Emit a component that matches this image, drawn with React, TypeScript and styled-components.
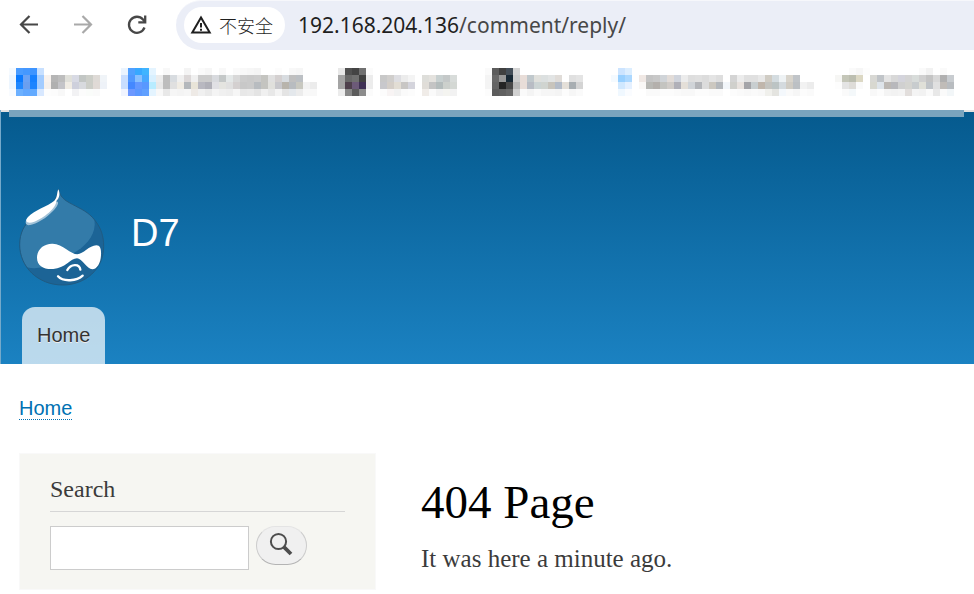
import React from "react";
import styled, { createGlobalStyle } from "styled-components";

const GlobalStyle = createGlobalStyle`
  * { box-sizing: border-box; }
  body { margin: 0; background: #fff; }
`;

const sans = `"Liberation Sans", Arial, sans-serif`;
const serif = `"Liberation Serif", Georgia, serif`;

const Toolbar = styled.nav`
  display: flex;
  align-items: center;
  height: 50px;
  padding-left: 16px;
`;

const ToolButton = styled.button<{ $faded?: boolean }>`
  display: grid;
  place-items: center;
  width: 26px;
  height: 26px;
  margin-right: 28px;
  padding: 0;
  border: 0;
  background: none;
  color: ${(p) => (p.$faded ? "#a9a9a9" : "#474747")};
`;

const AddressBar = styled.div`
  display: flex;
  flex: 1;
  align-items: center;
  align-self: stretch;
  min-width: 0;
  margin-left: -2px;
  padding: 0 0 2px 8px;
  border-top: 1px solid #f6f7fb;
  border-radius: 25px 0 0 25px;
  background: #ebeef7;
`;

const SecurityChip = styled.button`
  display: flex;
  flex: none;
  align-items: center;
  gap: 7px;
  width: 101px;
  height: 36px;
  padding: 0 0 0 6px;
  border: 0;
  border-radius: 18px;
  background: #fff;
  color: #1f1f1f;
  font: 300 18px/36px "Noto Sans CJK SC", sans-serif;
  white-space: nowrap;
`;

const Address = styled.div`
  margin-left: 13px;
  color: #474747;
  font: 21px/46px "Noto Sans", "Open Sans", sans-serif;
  white-space: nowrap;
`;

const Host = styled.span`
  color: #1f1f1f;
`;

const Bookmarks = styled.nav`
  display: flex;
  gap: 14px;
  height: 60px;
  padding: 18px 0 0 9px;
  overflow: hidden;
`;

const BookmarkLink = styled.a`
  flex: none;
  height: 28px;
`;

const Mosaic = styled.svg`
  display: block;
`;

const Header = styled.header`
  padding: 0 10px 0 8px;
  border-left: 1px solid #75a9ca;
  background: linear-gradient(#055a8e, #1b82c2) 0 2px no-repeat, #e2e2e2;
`;

const MenuStrip = styled.div`
  height: 7px;
  background: #7aa4be;
`;

const Branding = styled.div`
  display: flex;
  align-items: flex-start;
  gap: 26px;
  padding: 72px 10px 21px;
`;

const SiteName = styled.a`
  margin-top: 22px;
  color: #fffeff;
  font: 38px/44px ${sans};
  text-decoration: none;
`;

const Tabs = styled.nav`
  display: flex;
  padding-left: 13px;
`;

const Tab = styled.a`
  height: 57px;
  padding: 0 15px;
  border-radius: 13px 13px 0 0;
  background: rgba(255, 255, 255, 0.7);
  color: #333;
  font: 20px/56px ${sans};
  text-decoration: none;
  text-shadow: 0 1px #eee;
`;

const Breadcrumb = styled.nav`
  display: flex;
  padding: 34px 19px 33px;
`;

const BreadcrumbLink = styled.a`
  border-bottom: 1px dotted #0071b3;
  color: #0071b3;
  font: 20px/21px ${sans};
  text-decoration: none;
`;

const Columns = styled.div`
  display: grid;
  grid-template-columns: 357fr 552fr;
  gap: 45px;
  align-items: start;
  padding: 0 1px 4px 19px;
`;

const SearchBlock = styled.aside`
  padding: 21px 30px 19px;
  border: 1px solid #f9f9f9;
  background: #f6f6f2;
`;

const BlockTitle = styled.h2`
  margin: 0 0 14px;
  padding-bottom: 8px;
  border-bottom: 1px solid #d6d6d6;
  color: #3b3b3b;
  font: 24px/28px ${serif};
`;

const SearchForm = styled.form`
  display: flex;
  align-items: flex-start;
  gap: 7px;
`;

const SearchInput = styled.input`
  width: 199px;
  height: 44px;
  padding: 4px;
  border: 1px solid #ccc;
  background: #fff;
  font: 20px ${sans};
`;

const SearchButton = styled.button`
  display: grid;
  place-items: center;
  width: 51px;
  height: 39px;
  padding: 0 2px 4px 0;
  border: 1px solid #ccc;
  border-top-color: #e4e4e4;
  border-bottom-color: #b4b4b4;
  border-radius: 20px;
  background: #f0f0f0;
`;

const Content = styled.main`
  padding-top: 22px;
  font-family: ${serif};
`;

const PageTitle = styled.h1`
  margin: 0;
  color: #000;
  font-size: 47px;
  font-weight: 400;
  line-height: 54px;
`;

const Message = styled.p`
  margin: 16px 0 0;
  color: #3b3b3b;
  font-size: 25px;
  line-height: 28px;
`;

const CELL = 7;

type Bookmark = { name: string; columns: number; rows: string[] };

const bookmarks: Bookmark[] = [
  {
    name: "Bookmark 1",
    columns: 14,
    rows: [
      "f5faff 4a9cff 4598ff 3d94ff c8e0ff",
      "edf6ff 0a7aff 6aa2f5 1580ff a3ccff f8f2ee b5b5b5 bdbdbd e0e0da d8dae4 c2c6c4 cccec8 dedad6 f0f4f8",
      "edf6ff 2088ff 6a9ff0 1c84ff a3ccff f5f0ec b0b0b0 c4c4c8 f0ece4 ced0dc d8dade cccec8 e0dad6 eef2f8",
      "f8fbff 6cb0ff 62a8ff 62aaff d8e8ff fdfdfd fcfcfc f8f8f8 ffffff f2f2f4 fcfcfc fafcfa fafafa",
    ],
  },
  {
    name: "Bookmark 2",
    columns: 29,
    rows: [
      "eaf4ff 50a0ff 38a8ff 40b4ff e4f4ff ffffff f8f8f8 ffffff ffffff f4f4f4 ffffff fafafa f6f6f6 ffffff f8f8f8 ffffff fafafa f8f8f8 f6f6f6 f4f4f4 ffffff ffffff fcfcfc ffffff f8f8f8 f6f6f6",
      "c8deff 5098ff 88c0ff 48a8ff d8f0ff ececec bdbdbd d8dce0 f0f0f0 dcd8d8 f0f0f0 cccccc cccccc d8dade c4c8c8 e4e8e8 d8d8d8 cccccc cacaca cccccc c4c4c0 e0e0e0 d4d0d0 d8dce0 c0c0c0 bcc0c4",
      "c8deff 4488ff 6498ff 5898ff b8ecff e8e8e8 bdbdbd e0e0e0 f0ece4 b4b8bc e8e4d8 b8b8c0 b0b0b8 e0e0e4 e4e4e0 e0e0e0 d4d0d0 c8c8c8 cacaca b8bcc0 c4c4c0 e0e0dc c8c8cc b8b4ac b8bcc0 c8c8c0 f2f2f2 ececec",
      "f0f4ff 6c98ff 5c98ff 60a0ff e4f4ff f8f8f8 e8e8e8 f6f6f6 f4f4f4 f6f6f6 eeeae6 f0f0f0 eaeaea f4f4f4 f0f0f0 eeeeee f6f6f6 e8e8e8 eaeaea e4e4e4 f0f0f0 e8e8e8 f4f4f4 e4e4e4 e4e8ec ececec f8f8f8 f8f8f8",
    ],
  },
  {
    name: "Bookmark 3",
    columns: 19,
    rows: [
      "e8e8e8 505050 444444 707070 fbfbfb",
      "a4a4a4 686868 707070 404040 ececec ffffff c8c8c8 d0cecc dedee2 ececec f4f4f4 ffffff dededa e4e2de c8d0d0 c4c8c8 d8dcda",
      "a4a4a4 4e404c 6c5a78 3e3054 ececec ffffff c8c8cc d4cec8 e2ddd4 c8c6c4 d4d4dc ffffff e0ddd8 c4c4c4 b4bcbc ccd0cc d4d8d4",
      "ececec 888888 5c5c5c 8c8c8c fbfbfb ffffff fcfcfc f8f4f4 f2f2f2 fafafa fcfcfc ffffff f0ece8 fafafa f2f2f2 f4f4f0 f2f2f2",
    ],
  },
  {
    name: "Bookmark 4",
    columns: 16,
    rows: [
      "fafafa 5c5c5c 404040 444e58 d4d4d4",
      "f4f4f4 686868 989898 182834 cccccc e8ddd8 c0c8cc e0e0dc dce0e0 e2e4e4 e0dcd8 ffffff e0e0e0 e4e4e4",
      "f4f4f4 646464 242424 484848 b8b8b8 e8ddd8 b8bcc4 ccd4d4 d0d4d0 c8c4bc b4bcc8 e4dfd8 a8aeb2 d4d4d4",
      "fcfcfc 5c5c5c 606060 686868 d0d0d0 fafafa f4f4f4 fafafa f6f6f6 f6f6f6 f4f4f4 fcfcfc f6f6f6 fafafa",
    ],
  },
  {
    name: "Bookmark 5",
    columns: 30,
    rows: [
      "ffffff cce4ff dceeff",
      "f4faff 98d0ff acd8ff ffffff f0e8e4 c4c4c4 c8c8c8 d0d4d8 e2dcd8 d0d4dc ececec dedede e0e0e0 dcdcdc e4e4e4 dedede ffffff d4d4d4 ececec e0e0e0 e0e0e0 e8e8e8 d0ccc4 d4dce0 eef2f4 d8d4cc c0c4c8",
      "ffffff d0e8ff e4f0ff ffffff faf8f6 b8b8b4 b4b0ac c4c4c0 d0ccc8 b0b0b8 e4dfd8 d0d4d8 b4b6ba dcdcdc ccc8c0 b4b8bc f2f6fa d0d0cc e8e2de a4a4a8 c8ced0 c0b6ac c4c4c0 bcc4c4 d4dade d0ccc4 bcc0c4 f2f2f2 ececec",
      "ffffff f0f8ff fafcff ffffff ffffff fafafa fafafa fcfcfc fcfcfc fafafa f8f8f8 f8f8f8 fcfcfc fcfcfc fafafa fafafa ffffff fcfcfc fafafa f8f8f8 fafafa f8f8f8 f0f0ec e4e4e0 f4f8fc fafafa f6f6f6 fcfcfc fafafa",
    ],
  },
  {
    name: "Bookmark 6",
    columns: 17,
    rows: [
      "ffffff ffffff fafafa f6f6f6 fdfdfd ffffff ffffff ffffff ffffff ffffff ffffff ffffff fafafa f2f2f2 ffffff fafafa",
      "f6f6f4 c4c6b8 bcbeb0 dcd8c4 ffffff d8d8d4 c0c4c8 e4e4e4 d8d8d8 d4d4dc d4d4d4 d8dcda d0d0d0 c4c4c4 d8d8d8 b0b0b0 c8ccd0",
      "fdfdfd e4e4e4 dedcd8 fafafa ffffff d8d8d0 dee4ea bcb8b4 b8b8bc d0d0d0 d4d4d0 c8ccce e0e0d8 c0c4c8 e0e0e0 c0bcb8 b8bcc0",
      "ffffff fafafa f4f8fa ffffff ffffff f8f8f8 fcfcfc f4f4f4 f2f2f2 f4f4f4 e2dedc f4f4f4 f2f2f2 fafafa e8e8e8 fafafa f2f6f8",
    ],
  },
];

function BookmarkItem({ name, columns, rows }: Bookmark) {
  return (
    <BookmarkLink href="#" aria-label={name}>
      <Mosaic width={columns * CELL} height={4 * CELL} shapeRendering="crispEdges" aria-hidden="true">
        {rows.map((row, y) =>
          row.split(" ").map((color, x) => (
            <rect key={`${x}-${y}`} x={x * CELL} y={y * CELL} width={CELL} height={CELL} fill={`#${color}`} />
          ))
        )}
      </Mosaic>
    </BookmarkLink>
  );
}

const ArrowLeft = () => (
  <svg width="26" height="26" viewBox="0 0 26 26" fill="none" stroke="currentColor" strokeWidth="2.2">
    <path d="M22 12.500H6M13.500 4L5 12.500l8.500 8.500" />
  </svg>
);

const ArrowRight = () => (
  <svg width="26" height="26" viewBox="0 0 26 26" fill="none" stroke="currentColor" strokeWidth="2.2">
    <path d="M4 12.500h16M12.500 4L21 12.500l-8.500 8.500" />
  </svg>
);

const Reload = () => (
  <svg width="26" height="26" viewBox="0 0 26 26" fill="none" stroke="currentColor" strokeWidth="2.3">
    <path d="M20.500 15.500A8 8 0 1 1 19 7.500L21 10" />
    <path d="M21.200 3.500V10.400H14.300" />
  </svg>
);

const Warning = () => (
  <svg width="22" height="20" viewBox="0 0 22 20" fill="none" stroke="currentColor" strokeWidth="2">
    <path d="M11 2.500L2.300 17.500H19.700Z" />
    <path d="M11 8v4.500M11 13.700v2" />
  </svg>
);

const Magnifier = () => (
  <svg width="24" height="24" viewBox="0 0 24 24" fill="none" stroke="#4d4d4d">
    <circle cx="9.500" cy="9.500" r="7.600" strokeWidth="2" />
    <path d="M14.800 14.800L22 22" strokeWidth="3.800" />
  </svg>
);

const DrupalLogo = () => (
  <svg width="86" height="97" viewBox="27 11 258 291" role="img" aria-label="Home">
    <defs>
      <clipPath id="drop">
        <path d="M146 12C150 34 160 43 187 57C215 72 235 80 254 104C273 128 281 151 281 184C281 251 226 299 158 299C83 299 29 244 29 178C29 143 43 119 62 102C88 79 137 67 146 12Z" />
      </clipPath>
    </defs>
    <g clipPath="url(#drop)">
      <path d="M27 10H285V302H27Z" fill="#1c6496" />
      <path d="M20 10H225Q255 55 254 119C252 155 226 184 185 207L100 246C75 250 55 250 34 240L20 230Z" fill="#337ba9" />
    </g>
    <path d="M146 12C150 34 160 43 187 57C215 72 235 80 254 104C273 128 281 151 281 184C281 251 226 299 158 299C83 299 29 244 29 178C29 143 43 119 62 102C88 79 137 67 146 12Z" fill="none" stroke="#205b82" strokeWidth="3" />
    <path d="M137 49C151 46 143 64 129 77C109 98 82 115 61 119C45 122 44 109 52 99Z" fill="#a1c2d8" />
    <path d="M145 12C151 24 149 38 139 47C139 69 101 98 73 109C52 117 42 108 54 95C74 73 113 63 133 46C143 37 140 22 145 12Z" fill="#fff" />
    <path d="M81 217C81 191 103 174 128 175C158 176 183 207 202 207C219 207 238 180 259 180C272 180 274 194 273 210C272 233 261 252 247 252C231 252 216 219 201 219C182 219 164 250 130 251C102 253 81 242 81 217Z" fill="#fff" />
    <g fill="none" stroke="#fff" strokeWidth="7" strokeLinecap="round">
      <path d="M172 254C182 235 209 234 211 253" />
      <path d="M144 273C160 291 201 287 218 271" />
    </g>
  </svg>
);

export default function App() {
  return (
    <>
      <GlobalStyle />
      <Toolbar aria-label="Browser">
        <ToolButton aria-label="Back"><ArrowLeft /></ToolButton>
        <ToolButton aria-label="Forward" $faded><ArrowRight /></ToolButton>
        <ToolButton aria-label="Reload"><Reload /></ToolButton>
        <AddressBar>
          <SecurityChip><Warning />不安全</SecurityChip>
          <Address><Host>192.168.204.136</Host>/comment/reply/</Address>
        </AddressBar>
      </Toolbar>
      <Bookmarks aria-label="Bookmarks">
        {bookmarks.map((b) => <BookmarkItem key={b.name} {...b} />)}
      </Bookmarks>
      <Header>
        <MenuStrip />
        <Branding>
          <DrupalLogo />
          <SiteName href="#">D7</SiteName>
        </Branding>
        <Tabs aria-label="Main menu">
          <Tab href="#">Home</Tab>
        </Tabs>
      </Header>
      <Breadcrumb aria-label="Breadcrumb">
        <BreadcrumbLink href="#">Home</BreadcrumbLink>
      </Breadcrumb>
      <Columns>
        <SearchBlock>
          <BlockTitle>Search</BlockTitle>
          <SearchForm role="search" onSubmit={(e) => e.preventDefault()}>
            <SearchInput type="text" aria-label="Search" />
            <SearchButton type="submit" aria-label="Search"><Magnifier /></SearchButton>
          </SearchForm>
        </SearchBlock>
        <Content>
          <PageTitle>404 Page</PageTitle>
          <Message>It was here a minute ago.</Message>
        </Content>
      </Columns>
    </>
  );
}
